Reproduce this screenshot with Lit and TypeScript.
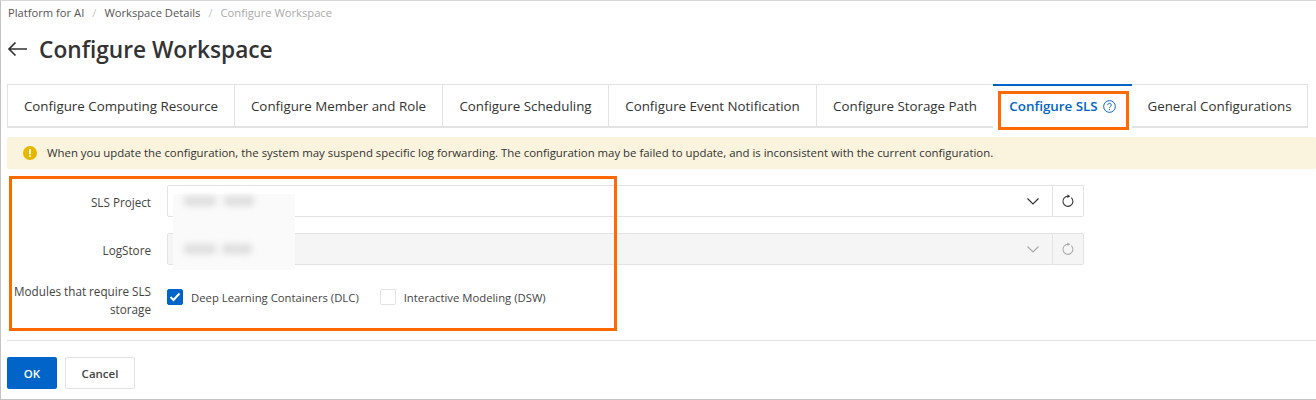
import { LitElement, html, css } from "lit";
import { customElement } from "lit/decorators.js";

@customElement("app-root")
export class AppRoot extends LitElement {
  static styles = css`
    :host { display: block; width: 1316px; height: 400px; overflow: hidden; background: #fff; font-family: "Open Sans", "Noto Sans", sans-serif; color: #333; font-size: 12px; }
    .page { position: relative; box-sizing: border-box; height: 400px; border-left: 1px solid #c4c4c4; border-top: 1px solid #d8d8d8; border-bottom: 1px solid #c4c4c4; padding-left: 6px; display: flex; flex-direction: column; }
    .crumbs { display: flex; height: 22px; align-items: center; gap: 8px; color: #555; font-size: 11.2px; padding-left: 1px; }
    .crumbs .sep { color: #c8c8c8; }
    .crumbs .last { color: #aaa; }
    .title { display: flex; align-items: center; gap: 11px; height: 34px; margin-top: 10px; }
    .title h1 { margin: 0; font-size: 22.7px; font-weight: 600; color: #333; line-height: 34px; }
    .title svg { margin-top: -2px; }
    .tabs { display: flex; margin-top: 17px; height: 44px; width: 1301px; box-sizing: border-box; border-bottom: 2px solid #e3e3e3; }
    .tab { box-sizing: border-box; height: 42px; border-top: 1px solid #e3e3e3; border-left: 1px solid #e3e3e3; display: flex; align-items: center; justify-content: center; font-size: 13.35px; color: #333; white-space: nowrap; }
    .tab.end { border-right: 1px solid #e3e3e3; }
    .tab.active { height: 44px; margin-bottom: -2px; background: #fff; border-top: 2px solid #0064c8; border-left: none; color: #0064c8; font-weight: 600; gap: 5px; padding-bottom: 2px; }
    .tab.active + .tab { border-left: none; }
    .alert { margin-top: 9px; height: 32px; background: #faf3dd; border-radius: 2px; display: flex; align-items: center; gap: 10px; padding-left: 16px; padding-bottom: 1px; box-sizing: border-box; font-size: 11.4px; color: #333; white-space: nowrap; }
    .form { display: flex; flex-direction: column; gap: 16px; margin-top: 16px; }
    .row { display: flex; align-items: center; height: 32px; }
    .label { width: 144px; text-align: right; font-size: 11.7px; font-weight: 500; color: #444; line-height: 18px; flex: none; padding-top: 1px; }
    .label.multi { padding-top: 6px; }
    .control { margin-left: 16px; display: flex; width: 917px; height: 32px; }
    .select { flex: 1; box-sizing: border-box; border: 1px solid #e3e3e3; border-radius: 2px 0 0 2px; display: flex; align-items: center; justify-content: flex-end; padding-right: 12px; }
    .refresh { width: 31px; box-sizing: border-box; border: 1px solid #e3e3e3; border-left: none; border-radius: 0 2px 2px 0; display: flex; align-items: center; justify-content: center; }
    .disabled .select, .disabled .refresh { background: #f5f5f5; }
    .checks { margin-left: 16px; display: flex; align-items: center; font-size: 11.3px; color: #444; }
    .box { box-sizing: border-box; width: 16px; height: 16px; border-radius: 2px; border: 1px solid #e3e3e3; background: #fff; display: flex; align-items: center; justify-content: center; margin-right: 8px; flex: none; }
    .box.on { background: #0064c8; border-color: #0064c8; }
    .check { display: flex; align-items: center; }
    .check + .check { margin-left: 21px; }
    .divider { margin-top: 27px; height: 1px; background: #e3e3e3; }
    .actions { display: flex; gap: 8px; margin-top: 16px; }
    .btn { box-sizing: border-box; height: 32px; display: flex; align-items: center; justify-content: center; border-radius: 2px; font-size: 11.5px; font-weight: 600; }
    .btn.primary { width: 50px; background: #0064c8; color: #fff; }
    .btn.ghost { width: 70px; border: 1px solid #e3e3e3; color: #444; }
    .mark { position: absolute; box-sizing: border-box; border: 3px solid #ff6a00; pointer-events: none; }
    .mark.tabmark { left: 997px; top: 90px; width: 131px; height: 39px; }
    .mark.formmark { left: 8px; top: 175px; width: 608px; height: 155px; }
    .patch { position: absolute; background: #fafafa; left: 172px; top: 193px; width: 122px; height: 76px; }
    .ghost-text { position: absolute; background: #dedede; filter: blur(3px); border-radius: 4px; height: 10px; }
    .ghost-text.a1 { left: 183px; top: 195px; width: 32px; }
    .ghost-text.a2 { left: 223px; top: 195px; width: 30px; }
    .ghost-text.b1 { left: 183px; top: 243px; width: 32px; }
    .ghost-text.b2 { left: 221px; top: 243px; width: 30px; }
  `;

  private refresh(color: string) {
    return html`<svg width="14" height="14" viewBox="0 0 14 14" fill="none" stroke="${color}" stroke-width="1.1"><path d="M10.3 3.6A5 5 0 1 1 7 2.3"/><path d="M6.4 0.5 9.4 2.3 6.4 4.1Z" fill="${color}" stroke="none"/></svg>`;
  }
  private chevron(color: string) {
    return html`<svg width="14" height="9" viewBox="0 0 14 9" fill="none" stroke="${color}" stroke-width="1.2"><path d="M1.5 1.5 7 7l5.5-5.5"/></svg>`;
  }

  render() {
    return html`<div class="page">
      <div class="crumbs"><span>Platform for AI</span><span class="sep">/</span><span>Workspace Details</span><span class="sep">/</span><span class="last">Configure Workspace</span></div>
      <div class="title">
        <svg width="21" height="16" viewBox="0 0 21 16" fill="none" stroke="#333" stroke-width="1.7"><path d="M20 8H2M8.5 1.5 2 8l6.5 6.5"/></svg>
        <h1>Configure Workspace</h1>
      </div>
      <div class="tabs">
        <div class="tab" style="width:227px">Configure Computing Resource</div>
        <div class="tab" style="width:208px">Configure Member and Role</div>
        <div class="tab" style="width:166px">Configure Scheduling</div>
        <div class="tab" style="width:208px">Configure Event Notification</div>
        <div class="tab" style="width:177px">Configure Storage Path</div>
        <div class="tab active" style="width:139px">Configure SLS
          <svg width="13" height="13" viewBox="0 0 12 12" fill="none" stroke="#0064c8" stroke-width="0.9"><circle cx="6" cy="6" r="5.4"/><path d="M4.4 4.7A1.6 1.6 0 1 1 6.9 6c-.6.4-.9.7-.9 1.3"/><path d="M6 8.3v1"/></svg>
        </div>
        <div class="tab end" style="width:176px">General Configurations</div>
      </div>
      <div class="alert">
        <svg width="14" height="14" viewBox="0 0 14 14"><circle cx="7" cy="7" r="7" fill="#e6b800"/><rect x="6.1" y="3" width="1.8" height="5.4" rx=".6" fill="#fff"/><rect x="6.1" y="9.3" width="1.8" height="1.8" rx=".6" fill="#fff"/></svg>
        <span>When you update the configuration, the system may suspend specific log forwarding. The configuration may be failed to update, and is inconsistent with the current configuration.</span>
      </div>
      <div class="form">
        <div class="row"><div class="label">SLS Project</div><div class="control"><div class="select">${this.chevron("#333")}</div><div class="refresh">${this.refresh("#333")}</div></div></div>
        <div class="row disabled"><div class="label">LogStore</div><div class="control"><div class="select">${this.chevron("#aaa")}</div><div class="refresh">${this.refresh("#aaa")}</div></div></div>
        <div class="row">
          <div class="label multi">Modules that require SLS storage</div>
          <div class="checks">
            <div class="check"><span class="box on"><svg width="12" height="10" viewBox="0 0 12 10" fill="none" stroke="#fff" stroke-width="2"><path d="M1.5 5 4.5 8l6-6.5"/></svg></span>Deep Learning Containers (DLC)</div>
            <div class="check"><span class="box"></span>Interactive Modeling (DSW)</div>
          </div>
        </div>
      </div>
      <div class="divider"></div>
      <div class="actions"><div class="btn primary">OK</div><div class="btn ghost">Cancel</div></div>
      <div class="patch"></div>
      <div class="ghost-text a1"></div>
      <div class="ghost-text a2"></div>
      <div class="ghost-text b1"></div>
      <div class="ghost-text b2"></div>
      <div class="mark tabmark"></div>
      <div class="mark formmark"></div>
    </div>`;
  }
}
